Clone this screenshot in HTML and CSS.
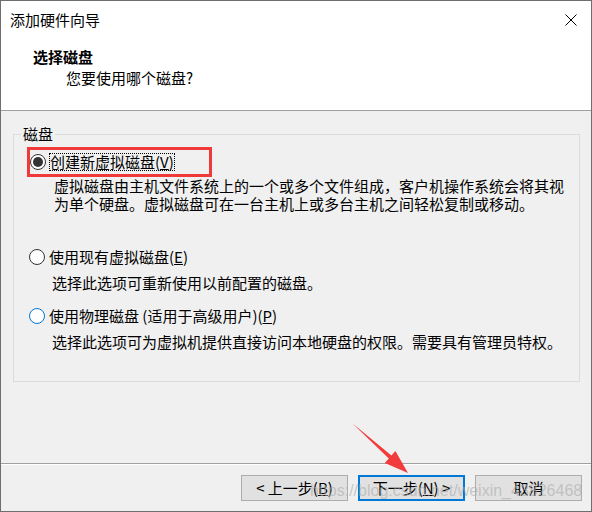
FILE: index.html
```html
<!DOCTYPE html>
<html lang="zh-CN">
<head>
<meta charset="utf-8">
<title>添加硬件向导</title>
<link rel="stylesheet" href="styles.css">
</head>
<body>
<div class="window">
  <div class="titlebar">
    <span class="title">添加硬件向导</span>
    <svg class="close" width="12" height="12" viewBox="0 0 12 12"><path d="M0.5 0.5 L11.5 11.5 M11.5 0.5 L0.5 11.5" stroke="#000" stroke-width="1" fill="none"/></svg>
  </div>
  <div class="header">
    <div class="h-title">选择磁盘</div>
    <div class="h-sub">您要使用哪个磁盘?</div>
  </div>
  <div class="body">
    <fieldset class="group">
      <legend>磁盘</legend>
      <div class="options">
        <div class="option highlight">
          <input class="radio" type="radio" name="disk" checked>
          <span class="label focus">创建新虚拟磁盘(<u>V</u>)</span>
        </div>
        <p class="desc first">虚拟磁盘由主机文件系统上的一个或多个文件组成，客户机操作系统会将其视<br>为单个硬盘。虚拟磁盘可在一台主机上或多台主机之间轻松复制或移动。</p>
        <div class="option opt2">
          <input class="radio" type="radio" name="disk">
          <span class="label">使用现有虚拟磁盘(<u>E</u>)</span>
        </div>
        <p class="desc">选择此选项可重新使用以前配置的磁盘。</p>
        <div class="option opt3">
          <input class="radio hover" type="radio" name="disk">
          <span class="label">使用物理磁盘 (适用于高级用户)(<u>P</u>)</span>
        </div>
        <p class="desc">选择此选项可为虚拟机提供直接访问本地硬盘的权限。需要具有管理员特权。</p>
      </div>
    </fieldset>
  </div>
  <div class="footer">
    <button class="btn">&lt; 上一步(<u>B</u>)</button>
    <button class="btn primary">下一步(<u>N</u>) &gt;</button>
    <button class="btn">取消</button>
  </div>
  <svg class="arrow" width="592" height="512" viewBox="0 0 592 512">
    <polygon points="352,423 391.4,455.5 395.4,451 408,473 384.8,463 388.8,458.5" fill="#f23c3c"/>
  </svg>
  <div class="watermark">https://blog.csdn.net/weixin_43826468</div>
</div>
</body>
</html>
```

FILE: styles.css
```css
html, body {
  margin: 0;
  padding: 0;
  background: #ffffff;
}

body {
  font-family: "Noto Sans CJK SC", sans-serif;
  font-size: 15px;
  color: #000;
}

.window {
  position: relative;
  width: 592px;
  height: 512px;
  box-sizing: border-box;
  border: 1px solid #6e6e6e;
  display: flex;
  flex-direction: column;
  background: #f0f0f0;
}

.titlebar {
  height: 38px;
  flex: none;
  display: flex;
  align-items: center;
  justify-content: space-between;
  padding: 0 14px 0 9px;
  background: #fff;
  line-height: 38px;
}

.close {
  display: block;
}

.header {
  flex: none;
  height: 72px;
  box-sizing: border-box;
  background: #fff;
  border-bottom: 1px solid #a0a0a0;
  padding: 9px 0 0 32px;
}

.h-title {
  font-weight: bold;
  line-height: 18px;
}

.h-sub {
  margin-top: 3px;
  padding-left: 33px;
  line-height: 18px;
}

.body {
  flex: 1;
  padding: 14px 11px 0 12px;
}

.group {
  margin: 0;
  min-width: 0;
  border: 1px solid #dcdcdc;
  padding: 4px 0 30px 7px;
}

.group legend {
  padding: 0 2px;
  margin: 0;
  line-height: 18px;
}

.options {
  padding-left: 6px;
}

.option {
  display: flex;
  align-items: center;
  height: 20px;
  padding-left: 2px;
}

.option.highlight {
  box-sizing: border-box;
  width: 185px;
  height: 30px;
  padding-left: 0;
  border: 3px solid #f03a3a;
}

.opt2 {
  margin-top: 34px;
}

.opt3 {
  margin-top: 14px;
}

.radio {
  appearance: none;
  -webkit-appearance: none;
  margin: 0;
  width: 16px;
  height: 16px;
  box-sizing: border-box;
  border: 1px solid #333;
  border-radius: 50%;
  background: #fff;
  flex: none;
  display: grid;
  place-content: center;
}

.radio:checked::before {
  content: "";
  width: 10px;
  height: 10px;
  border-radius: 50%;
  background: #333;
}

.radio.hover {
  border-color: #0078d7;
}

.label {
  margin-left: 4px;
  line-height: 18px;
  white-space: nowrap;
}

.highlight .label {
  margin-left: 3px;
}

.label.focus {
  outline: 1px dotted #000;
  outline-offset: -1px;
  padding: 0 1px;
}

.desc {
  margin: 7px 0 0;
  padding-left: 25px;
  line-height: 18px;
  white-space: nowrap;
}

.desc.first {
  margin-top: 0;
  padding-left: 27px;
}

.footer {
  flex: none;
  height: 48px;
  box-sizing: border-box;
  border-top: 1px solid #a0a0a0;
  box-shadow: inset 0 1px #fff;
  padding: 11px 9px 0 0;
  display: flex;
  justify-content: flex-end;
  align-items: flex-start;
  gap: 10px;
}

.btn {
  width: 107px;
  height: 26px;
  box-sizing: border-box;
  border: 1px solid #adadad;
  background: #e1e1e1;
  font-family: "Noto Sans CJK SC", sans-serif;
  font-size: 15px;
  line-height: 18px;
  color: #000;
  padding: 0;
  margin: 0;
}

.btn.primary {
  border: 2px solid #0078d7;
}

.arrow {
  position: absolute;
  left: -1px;
  top: -1px;
  pointer-events: none;
}

.watermark {
  position: absolute;
  left: 309px;
  top: 481px;
  font-family: "Liberation Sans", Arial, sans-serif;
  font-size: 16px;
  line-height: 18px;
  color: rgba(170, 170, 170, 0.6);
  white-space: nowrap;
  pointer-events: none;
}
```
